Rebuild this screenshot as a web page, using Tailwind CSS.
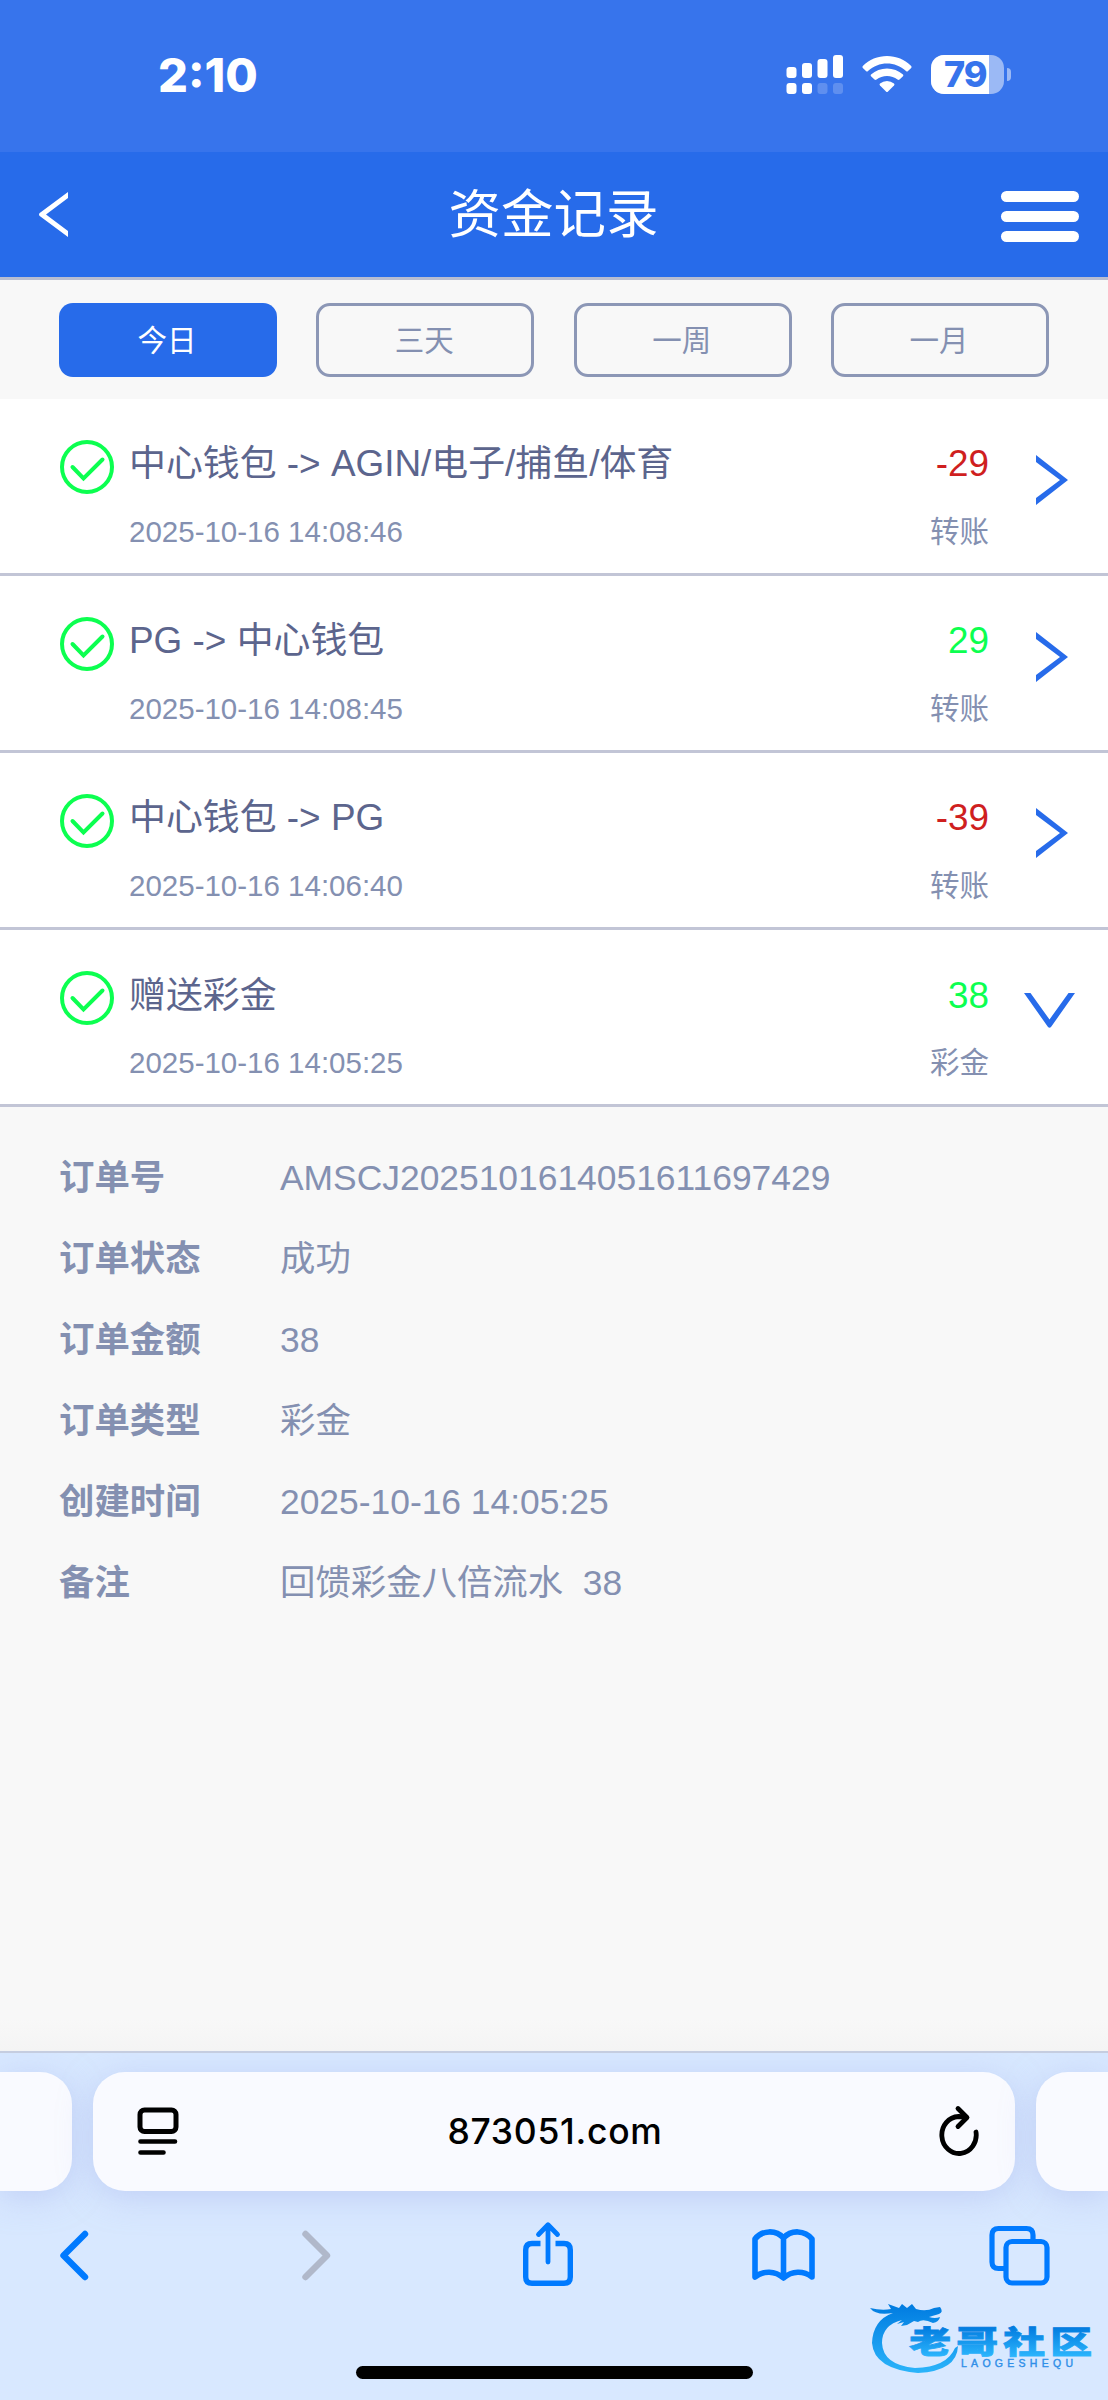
<!DOCTYPE html>
<html lang="zh-CN">
<head>
  <meta charset="UTF-8" />
  <meta name="viewport" content="width=device-width, initial-scale=1" />
  <title>资金记录</title>
  <script src="https://cdn.jsdelivr.net/npm/@tailwindcss/browser@4"></script>
  <style>
    body {
      font-family: 'Liberation Sans', 'Noto Sans CJK SC', sans-serif;
    }
  </style>
</head>
<body class="bg-[#f8f8f8]">
  <!-- shared icons -->
  <svg class="hidden">
    <symbol id="check" viewBox="0 0 54 54">
      <circle cx="27" cy="27" r="25" fill="none" stroke="#0cff50" stroke-width="4" />
      <path d="M12.500 27l11 11.500L42.500 19.500" fill="none" stroke="#0cff50" stroke-width="4" stroke-linecap="round" />
    </symbol>
    <symbol id="right" viewBox="0 0 32 50">
      <path d="M0 0L32 25L0 50V43L24 25L0 7Z" fill="#276bea" />
    </symbol>
    <symbol id="down" viewBox="0 0 51 35">
      <path d="M0 0H6.500L25.500 26.500L44.500 0H51L27 34Q25.500 35.500 24 34Z" fill="#276bea" />
    </symbol>
  </svg>

  <div class="w-[1108px] h-[2400px] flex flex-col overflow-hidden">
    <!-- status bar -->
    <div class="h-[152px] shrink-0 bg-[#3774ec] flex items-start text-white font-[Inter]">
      <div class="ml-[158px] mt-[46px] h-[58px] leading-[58px] w-[110px] text-[47px] font-extrabold">2:10</div>
      <svg class="ml-[518px] mt-[55px]" width="58" height="40" viewBox="0 0 58 40" fill="#fff">
        <rect x="0.500" y="12" width="10" height="11" rx="3" />
        <rect x="16" y="8" width="10" height="15" rx="3" />
        <rect x="31.500" y="4" width="10" height="19" rx="3" />
        <rect x="47" y="0" width="10" height="23" rx="3" />
        <rect x="0.500" y="28" width="10" height="11" rx="3" />
        <rect x="16" y="28" width="10" height="11" rx="3" />
        <rect x="31.500" y="28" width="10" height="11" rx="3" opacity=".2" />
        <rect x="47" y="28" width="10" height="11" rx="3" opacity=".2" />
      </svg>
      <svg class="ml-[18px] mt-[55px]" width="50" height="38" viewBox="0 0 50 38" fill="#fff">
        <path d="M25 1C34 1 43 4.500 49.200 11Q50 12 49.200 13L46 16Q45 17 44 16C38.500 11 32 8.500 25 8.500S11.500 11 6 16Q5 17 4 16L0.800 13Q0 12 0.800 11C7 4.500 16 1 25 1Z" />
        <path d="M25 13.500C31 13.500 36.500 15.700 41 19.500Q41.800 20.300 41 21.200L37.500 24.500Q36.500 25.300 35.500 24.500Q31 21 25 21T14.500 24.500Q13.500 25.300 12.500 24.500L9 21.200Q8.200 20.300 9 19.500C13.500 15.700 19 13.500 25 13.500Z" />
        <path d="M25 26Q29 26 32 28.500Q33 29.500 32 30.500L26 36.500Q25 37.500 24 36.500L18 30.500Q17 29.500 18 28.500Q21 26 25 26Z" />
      </svg>
      <div class="ml-[19px] mt-[55px] w-[73px] h-[39px] rounded-[13px] bg-[#9bb9f5]">
        <div class="w-[58px] h-[39px] rounded-l-[13px] bg-white pl-[13px] leading-[39px] text-[36px] font-extrabold text-[#3774ec] tracking-[-1px]">79</div>
      </div>
      <div class="ml-[3px] mt-[68px] w-[4px] h-[13px] rounded-r-full bg-[#9bb9f5]"></div>
    </div>

    <!-- page header -->
    <header class="h-[128px] shrink-0 bg-[#276bea] border-b-[3px] border-[#b8bdd1] flex items-center justify-between pl-[39px] pr-[29px]">
      <svg class="w-[78px] h-[45px]" viewBox="0 0 78 45" fill="#fff">
        <path d="M29 0V6L7 22.500L29 39V45L0.700 24Q-0.700 22.500 0.700 21Z" />
      </svg>
      <h1 class="pr-[11px] text-[52.500px] leading-[76px] text-white">资金记录</h1>
      <div class="flex flex-col gap-[8.500px] w-[78px] pt-[4px]">
        <div class="h-[11.500px] rounded-full bg-white"></div>
        <div class="h-[11.500px] rounded-full bg-white"></div>
        <div class="h-[11.500px] rounded-full bg-white"></div>
      </div>
    </header>

    <!-- date filter -->
    <div class="h-[119px] shrink-0 pt-[23px] px-[59px] grid grid-cols-4 gap-x-[39.500px] text-[29.500px] text-[#8490b1]">
      <button class="h-[74px] pt-[3px] pr-[2px] rounded-[14px] bg-[#276bea] text-white">今日</button>
      <button class="h-[74px] pt-[3px] pr-[2px] rounded-[14px] border-3 border-[#8c97b6]">三天</button>
      <button class="h-[74px] pt-[3px] pr-[2px] rounded-[14px] border-3 border-[#8c97b6]">一周</button>
      <button class="h-[74px] pt-[3px] pr-[2px] rounded-[14px] border-3 border-[#8c97b6]">一月</button>
    </div>

    <!-- records -->
    <div class="h-[177px] shrink-0 bg-white border-b-3 border-[#c2c5d6] flex items-start">
      <svg class="ml-[60px] mt-[41px] w-[54px] h-[54px]"><use href="#check" /></svg>
      <div class="ml-[15px] mt-[38px] flex-1">
        <div class="text-[36.900px] leading-[54px] text-[#5c658d]">中心钱包 -&gt; AGIN/电子/捕鱼/体育</div>
        <div class="mt-[20px] text-[29.500px] leading-[42px] text-[#8490b1]">2025-10-16 14:08:46</div>
      </div>
      <div class="mt-[38px] text-right">
        <div class="text-[36.900px] leading-[54px] text-[#cf1f1f]">-29</div>
        <div class="mt-[20px] text-[29.500px] leading-[42px] text-[#8490b1]">转账</div>
      </div>
      <svg class="ml-[47px] mr-[40px] mt-[56px] w-[32px] h-[50px]"><use href="#right" /></svg>
    </div>
    <div class="h-[177px] shrink-0 bg-white border-b-3 border-[#c2c5d6] flex items-start">
      <svg class="ml-[60px] mt-[41px] w-[54px] h-[54px]"><use href="#check" /></svg>
      <div class="ml-[15px] mt-[38px] flex-1">
        <div class="text-[36.900px] leading-[54px] text-[#5c658d]">PG -&gt; 中心钱包</div>
        <div class="mt-[20px] text-[29.500px] leading-[42px] text-[#8490b1]">2025-10-16 14:08:45</div>
      </div>
      <div class="mt-[38px] text-right">
        <div class="text-[36.900px] leading-[54px] text-[#0cff50]">29</div>
        <div class="mt-[20px] text-[29.500px] leading-[42px] text-[#8490b1]">转账</div>
      </div>
      <svg class="ml-[47px] mr-[40px] mt-[56px] w-[32px] h-[50px]"><use href="#right" /></svg>
    </div>
    <div class="h-[177px] shrink-0 bg-white border-b-3 border-[#c2c5d6] flex items-start">
      <svg class="ml-[60px] mt-[41px] w-[54px] h-[54px]"><use href="#check" /></svg>
      <div class="ml-[15px] mt-[38px] flex-1">
        <div class="text-[36.900px] leading-[54px] text-[#5c658d]">中心钱包 -&gt; PG</div>
        <div class="mt-[20px] text-[29.500px] leading-[42px] text-[#8490b1]">2025-10-16 14:06:40</div>
      </div>
      <div class="mt-[38px] text-right">
        <div class="text-[36.900px] leading-[54px] text-[#cf1f1f]">-39</div>
        <div class="mt-[20px] text-[29.500px] leading-[42px] text-[#8490b1]">转账</div>
      </div>
      <svg class="ml-[47px] mr-[40px] mt-[55px] w-[32px] h-[50px]"><use href="#right" /></svg>
    </div>
    <div class="h-[177px] shrink-0 bg-white border-b-3 border-[#c2c5d6] flex items-start">
      <svg class="ml-[60px] mt-[41px] w-[54px] h-[54px]"><use href="#check" /></svg>
      <div class="ml-[15px] mt-[39px] flex-1">
        <div class="text-[36.900px] leading-[54px] text-[#5c658d]">赠送彩金</div>
        <div class="mt-[19px] text-[29.500px] leading-[42px] text-[#8490b1]">2025-10-16 14:05:25</div>
      </div>
      <div class="mt-[39px] text-right">
        <div class="text-[36.900px] leading-[54px] text-[#0cff50]">38</div>
        <div class="mt-[19px] text-[29.500px] leading-[42px] text-[#8490b1]">彩金</div>
      </div>
      <svg class="ml-[35px] mr-[33px] mt-[63px] w-[51px] h-[35px]"><use href="#down" /></svg>
    </div>

    <!-- order details -->
    <dl class="flex-1 pt-[31px] pl-[59px] grid grid-cols-[221px_1fr] auto-rows-[81px] text-[35.400px] leading-[81px] text-[#8490b1]">
      <dt class="font-bold">订单号</dt><dd>AMSCJ2025101614051611697429</dd>
      <dt class="font-bold">订单状态</dt><dd>成功</dd>
      <dt class="font-bold">订单金额</dt><dd>38</dd>
      <dt class="font-bold">订单类型</dt><dd>彩金</dd>
      <dt class="font-bold">创建时间</dt><dd>2025-10-16 14:05:25</dd>
      <dt class="font-bold">备注</dt><dd class="whitespace-pre">回馈彩金八倍流水  38</dd>
    </dl>
    <div class="h-[32px] shrink-0 bg-linear-to-b from-[#f8f8f8] to-[#f4f4f4]"></div>

    <!-- browser bar -->
    <footer class="relative h-[349px] shrink-0 overflow-hidden bg-[#d8e8ff] border-t-2 border-[#c5cde0]">
      <div class="pt-[19px] flex gap-[21px]">
        <div class="h-[119px] w-[72px] shrink-0 rounded-r-[32px] bg-[#f9faff] shadow-[0_6px_32px_#a9b8ee80]"></div>
        <div class="h-[119px] w-[922px] shrink-0 rounded-[32px] bg-[#f9faff] shadow-[0_6px_32px_#a9b8ee80] flex items-center pl-[44px] pr-[36px]">
          <svg class="w-[42px] h-[50px]" viewBox="0 0 42 50" fill="none" stroke="#000" stroke-width="5" stroke-linecap="round">
            <rect x="3" y="3" width="36" height="21.500" rx="4.500" />
            <path d="M3.500 34.500H38M3.500 45.500H26.500" stroke-width="4.600" />
          </svg>
          <div class="flex-1 pr-[6px] pt-[1px] text-center text-black font-[Inter] font-medium text-[35.500px] leading-[48px] tracking-[0.700px]">873051.com</div>
          <svg class="w-[42px] h-[54px]" viewBox="0 0 42 54" fill="none" stroke="#000" stroke-width="4.800" stroke-linecap="round" stroke-linejoin="round">
            <path d="M39 27A17.200 18.500 0 1 1 21.500 11.500Q25.500 11.500 29 12.500" />
            <path d="M21 3.500L30 12.500L21 21.500" />
          </svg>
        </div>
        <div class="h-[119px] w-[72px] shrink-0 rounded-l-[32px] bg-[#f9faff] shadow-[0_6px_32px_#a9b8ee80]"></div>
      </div>

      <div class="mt-[29px] h-[68px] flex items-start">
        <svg class="ml-[59px] w-[32px] h-[68px]" viewBox="0 0 32 68" fill="none" stroke="#007aff" stroke-width="6.400" stroke-linecap="round" stroke-linejoin="round">
          <path d="M26 14L4.500 35.500L26 57" />
        </svg>
        <svg class="ml-[209px] w-[34px] h-[68px]" viewBox="0 0 34 68" fill="none" stroke="#b0b8ca" stroke-width="6.400" stroke-linecap="round" stroke-linejoin="round">
          <path d="M5.500 14L27 35.500L5.500 57" />
        </svg>
        <svg class="ml-[189px] w-[50px] h-[68px]" viewBox="0 0 50 68" fill="none" stroke="#007aff" stroke-width="5.400" stroke-linejoin="round">
          <path d="M17.500 23.500H9Q2.700 23.500 2.700 30V57Q2.700 63.300 9 63.300H41Q47.300 63.300 47.300 57V30Q47.300 23.500 41 23.500H32.500" />
          <path d="M25 42V5M15.500 14.500L25 4.800L34.500 14.500" stroke-width="4.800" stroke-linecap="round" />
        </svg>
        <svg class="ml-[179px] w-[64px] h-[68px]" viewBox="0 0 64 68" fill="none" stroke="#007aff" stroke-width="5.600" stroke-linecap="round" stroke-linejoin="round">
          <path d="M31.500 18.500V58C23 50.500 11.500 50.500 3 57V19C10 10 24 9.500 31.500 18C39 9.500 53 10 60 19V57C51.500 50.500 40 50.500 31.500 58" />
        </svg>
        <svg class="ml-[173px] w-[62px] h-[68px]" viewBox="0 0 62 68" fill="none" stroke="#007aff" stroke-width="5.200">
          <rect x="17" y="21.500" width="41" height="41.500" rx="6" />
          <path d="M17 48.500H9.500Q3 48.500 3 42V15Q3 8.500 9.500 8.500H37.500Q44 8.500 44 15V21.500" />
        </svg>
      </div>

      <!-- home indicator -->
      <div class="mx-auto mt-[78px] w-[397px] h-[13px] rounded-full bg-black"></div>

      <!-- community logo -->
      <svg class="absolute right-0 bottom-[20px] w-[240px] h-[90px]" viewBox="0 0 240 90">
        <defs>
          <linearGradient id="logo" x1="0" y1="14" x2="0" y2="84" gradientUnits="userSpaceOnUse">
            <stop offset="0" stop-color="#007be0" />
            <stop offset="1" stop-color="#2bb5fb" />
          </linearGradient>
          <linearGradient id="logoText" x1="0" y1="36" x2="0" y2="67" gradientUnits="userSpaceOnUse">
            <stop offset="0" stop-color="#0079de" />
            <stop offset="1" stop-color="#2cb6fd" />
          </linearGradient>
        </defs>
        <path fill="url(#logo)" d="M2 18Q14 21 23 19L20 14L31 18L34 14L39 18L44 14L48 19Q58 22 66 18L72 17Q76 22 71 24Q64 26 61 27Q67 29 72 27Q71 32 65 33Q55 28 50 32L46 31L39 35L33 36L36 32L29 34L34 30Q14 35 14 53Q15 75 47 78Q79 77 87 58L90 56Q89 81 50 83Q6 79 4 53Q5 30 25 23Q8 26 2 18Z" />
        <text transform="scale(1.35 1)" x="30.500" y="63" textLength="135.500" font-family="Noto Sans CJK SC" font-weight="900" font-size="31" fill="url(#logoText)" stroke="url(#logoText)" stroke-width=".8">老哥社区</text>
        <text x="93" y="76.500" textLength="112" font-family="Liberation Sans" font-size="10.500" fill="#2f8fe8" stroke="#2f8fe8" stroke-width=".4">LAOGESHEQU</text>
      </svg>
    </footer>
  </div>
</body>
</html>
